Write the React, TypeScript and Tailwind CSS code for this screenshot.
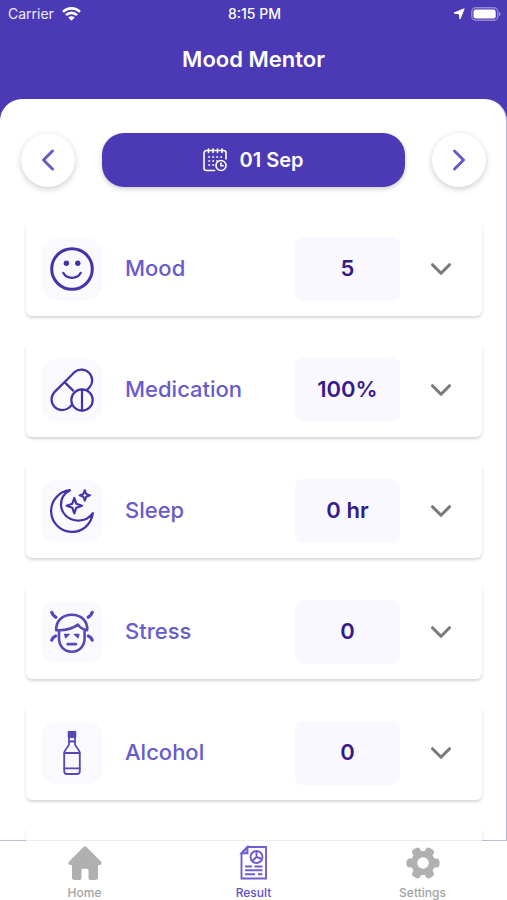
import { ReactNode, useState } from "react";
import { ChevronDown, ChevronLeft, ChevronRight } from "lucide-react";

interface Entry {
    label: string;
    value: string;
    icon: ReactNode;
}

interface Tab {
    label: string;
    icon: ReactNode;
}

const iconProps = {
    className: "h-11 w-11",
    viewBox: "0 0 44 44",
    fill: "none",
    stroke: "currentColor",
    strokeWidth: 2.2,
    strokeLinecap: "round" as const,
    strokeLinejoin: "round" as const,
    "aria-hidden": true,
};

const MoodIcon = () => (
    <svg {...iconProps} strokeWidth={3}>
        <circle cx="22" cy="22" r="20.3" />
        <circle cx="16.4" cy="16.3" r="2.7" fill="currentColor" stroke="none" />
        <circle cx="27.8" cy="16.3" r="2.7" fill="currentColor" stroke="none" />
        <path d="M13.3 25.8c3.2 6.7 14.2 6.7 17.4 0" strokeWidth="2.2" />
    </svg>
);

const MedicationIcon = () => (
    <svg {...iconProps}>
        <path d="M36.7 22.3l2.8-3A10.7 10.7 0 0 0 24.4 4.2L4.2 24.4a10.7 10.7 0 0 0 15.1 15.1l2.8-3" />
        <path d="M15 14.6l8.2 8" />
        <circle cx="32" cy="32" r="10.7" />
        <path d="M32 21.5v21" />
    </svg>
);

const SleepIcon = () => (
    <svg {...iconProps}>
        <path d="M20 1.2A20.9 20.9 0 1 0 42.8 24.2C39.5 29.2 33.5 31.9 27 31.5C18 31 11 24 11 15.5C11 9.5 14.2 4.2 20 1.2Z" />
        <path d="M24.3 9l2 5.7 5.7 2-5.7 2-2 5.7-2-5.7-5.7-2 5.7-2z" />
        <path d="M34.8 1.2l1.4 3.8 3.8 1.4-3.8 1.4-1.4 3.8-1.4-3.8-3.8-1.4 3.8-1.4z" strokeWidth="2" />
    </svg>
);

const StressIcon = () => (
    <svg {...iconProps} className="h-11 w-11 text-[#5a47b6]">
        <path d="M6.2 20.2C5.8 11 12.5 4.8 21.8 4.8S37.8 11 37.2 20.2C34 19.6 30 18 28 14.6C23 18.2 15 20.8 6.2 20.2Z" strokeWidth="2.6" />
        <path d="M9 20.5V28c0 8 5 13.7 12.8 13.7S34.6 36 34.6 28v-8" strokeWidth="2.6" />
        <path d="M14.6 24.4h4.6l-3.6 3.4zM29 24.4h-4.6l3.6 3.4z" fill="currentColor" strokeWidth="1.2" />
        <path d="M17.8 34.2h8" strokeWidth="2.8" />
        <path d="M1.8 2.5l1.4 2.6 2.6 2.2M42.2 2.5l-1.4 2.6-2.6 2.2M1.8 30l1.4-2.4 2.4-1.6M42.2 30l-1.4-2.4-2.4-1.6" strokeWidth="3.2" />
    </svg>
);

const AlcoholIcon = () => (
    <svg {...iconProps} className="h-11 w-11 text-[#5a47b6]" strokeWidth={1.8}>
        <path d="M18.6 1h6.8v5h-6.8z" fill="currentColor" />
        <path d="M19 6v7c0 3-4.8 5-4.8 9.5v17.8c0 1.8 1 2.7 2.7 2.7h10.2c1.7 0 2.7-.9 2.7-2.7V22.5c0-4.5-4.8-6.5-4.8-9.5V6" />
        <path d="M19 10.5h6M14.2 22h15.6M14.2 37.3h15.6" />
    </svg>
);

const CalendarIcon = () => (
    <svg className="h-6 w-6" viewBox="0 0 24 24" fill="none" stroke="currentColor" strokeWidth="1.6" strokeLinecap="round" aria-hidden>
        <path d="M11.5 22.5h-8A2.5 2.5 0 0 1 1 20V5a2.5 2.5 0 0 1 2.5-2.5h17A2.5 2.5 0 0 1 23 5v6" />
        <path d="M5.5 1v3.5M10 1v3.5M14.5 1v3.5M19 1v3.5" />
        <path d="M6 9h13M6 13h9M6 17h5" strokeDasharray="0.4 3.6" strokeWidth="1.8" strokeOpacity="0.8" />
        <circle cx="18" cy="17.5" r="5" />
        <path d="M18 15v2.7h2.2" />
    </svg>
);

const HomeIcon = () => (
    <svg className="h-9 w-9 text-[#b0b0b0]" viewBox="0 0 36 36" fill="currentColor" aria-hidden>
        <path d="M16.3 2.2 2.1 16.4c-1.4 1.5-.5 3.6 1.7 3.6H5v12.5C5 34.3 6 35 7.5 35h5c1.3 0 2-.7 2-2v-7.500c0-1 .7-1.700 1.700-1.700h3.600c1 0 1.700.7 1.700 1.700V33c0 1.300.7 2 2 2h5c1.500 0 2.500-.7 2.500-2.500V20h1.200c2.200 0 3.100-2.100 1.700-3.600L19.700 2.200a2.400 2.400 0 0 0-3.400 0z" />
    </svg>
);

const ResultIcon = () => (
    <svg className="h-9 w-9 text-[#6f5dd3]" viewBox="0 0 36 36" fill="none" stroke="currentColor" strokeWidth="1.9" aria-hidden>
        <path d="M11.5 2H30v31.5H5.5V8.2z" />
        <path d="M11.5 2v6.2h-6z" fill="currentColor" fillOpacity="0.4" />
        <circle cx="20.5" cy="12" r="6" />
        <path d="M20.5 6v6l-4.5 4M20.5 12l5.5 2" />
        <path d="M9 21.5h7M18.5 21.5h8M9 25.3h17.5M9 29.2h10M22 29.2h4.5" />
    </svg>
);

const SettingsIcon = () => (
    <svg className="h-9 w-9 text-[#b0b0b0]" viewBox="0 0 36 36" aria-hidden>
        <g fill="currentColor">
            <circle cx="18" cy="18" r="12" />
            {[0, 60, 120].map((angle) => (
                <rect key={angle} x="1.5" y="13.5" width="33" height="9" rx="3.5" transform={`rotate(${angle} 18 18)`} />
            ))}
        </g>
        <circle cx="18" cy="18" r="5.8" fill="white" />
    </svg>
);

const entries: Entry[] = [
    { label: "Mood", value: "5", icon: <MoodIcon /> },
    { label: "Medication", value: "100%", icon: <MedicationIcon /> },
    { label: "Sleep", value: "0 hr", icon: <SleepIcon /> },
    { label: "Stress", value: "0", icon: <StressIcon /> },
    { label: "Alcohol", value: "0", icon: <AlcoholIcon /> },
];

const tabs: Tab[] = [
    { label: "Home", icon: <HomeIcon /> },
    { label: "Result", icon: <ResultIcon /> },
    { label: "Settings", icon: <SettingsIcon /> },
];

const cardClass = "h-[95px] shrink-0 rounded-md bg-white shadow-[0_2px_3px_rgba(0,0,0,0.16)]";

function StatusBar() {
    return (
        <div className="grid h-7 grid-cols-3 items-center pr-1.5 pl-2 text-sm">
            <div className="flex items-center gap-2">
                <span className="text-white/90">Carrier</span>
                <svg className="h-3.5 w-[19px]" viewBox="0 0 19 14" fill="none" stroke="currentColor" strokeWidth="2.6" aria-hidden>
                    <path d="M1 4.9a12 12 0 0 1 17 0M4 8.2a7.7 7.7 0 0 1 11 0" />
                    <path d="M6.3 10.6a4.5 4.5 0 0 1 6.4 0L9.5 13.8z" fill="currentColor" stroke="none" />
                </svg>
            </div>
            <span className="text-center font-medium">8:15 PM</span>
            <div className="flex items-center justify-end gap-1.5">
                <svg className="h-3 w-3" viewBox="0 0 12 12" fill="currentColor" stroke="currentColor" strokeLinejoin="round" aria-hidden>
                    <path d="M11.2.8 7 11 6.2 5.8 1 5z" />
                </svg>
                <svg className="h-3.5 w-[30px]" viewBox="0 0 30 14" fill="none" aria-hidden>
                    <rect x="0.8" y="0.8" width="26" height="12.4" rx="4" stroke="white" strokeWidth="1.4" strokeOpacity="0.4" />
                    <rect x="2.5" y="2.5" width="22.2" height="9" rx="2.2" fill="white" />
                    <path d="M28 5c2 .6 2 3.4 0 4z" fill="white" fillOpacity="0.45" />
                </svg>
            </div>
        </div>
    );
}

function EntryCard({ label, value, icon }: Entry) {
    return (
        <article className={`${cardClass} flex items-center pr-6 pl-[15px]`}>
            <div className="flex h-[62px] w-[62px] items-center justify-center rounded-2xl bg-[#faf9fe] text-[#4631a8]">
                {icon}
            </div>
            <h2 className="ml-[22px] flex-1 text-[22px] font-medium text-[#695bcb]">{label}</h2>
            <output className="flex h-16 w-[105px] items-center justify-center rounded-lg bg-[#f9f8fe] text-[22px] font-semibold text-[#351a8c]">
                {value}
            </output>
            <button aria-label={`Expand ${label}`} className="ml-6 text-[#7b7b7b]">
                <ChevronDown className="h-[34px] w-[34px]" strokeWidth={2.2} />
            </button>
        </article>
    );
}

export default function App() {
    const [activeTab, setActiveTab] = useState("Result");

    return (
        <div className="flex h-dvh flex-col bg-[#4b39b5] font-['Inter',sans-serif]">
            <header className="h-[99px] shrink-0 text-white">
                <StatusBar />
                <h1 className="pt-4 text-center text-[22px] leading-[30px] font-semibold">Mood Mentor</h1>
            </header>

            <main className="flex min-h-0 flex-1 flex-col overflow-hidden rounded-t-[22px] border-r border-[#b9b1e2] bg-white">
                <div className="flex shrink-0 items-center gap-[27px] pt-[34px] pr-5 pl-[21px]">
                    <button
                        aria-label="Previous day"
                        className="flex h-[54px] w-[54px] items-center justify-center rounded-full bg-white text-[#6a58c8] shadow-[0_2px_6px_rgba(0,0,0,0.2)]"
                    >
                        <ChevronLeft className="h-9 w-9" strokeWidth={2} />
                    </button>
                    <button className="flex h-[54px] flex-1 items-center justify-center gap-3 rounded-[22px] bg-[#4b39b5] text-xl font-semibold text-white shadow-[0_2px_5px_rgba(0,0,0,0.2)]">
                        <CalendarIcon />
                        01 Sep
                    </button>
                    <button
                        aria-label="Next day"
                        className="flex h-[54px] w-[54px] items-center justify-center rounded-full bg-white text-[#6a58c8] shadow-[0_2px_6px_rgba(0,0,0,0.2)]"
                    >
                        <ChevronRight className="h-9 w-9" strokeWidth={2} />
                    </button>
                </div>

                <section className="mt-6 flex min-h-0 flex-1 flex-col gap-[26px] overflow-y-auto pt-2.5 pr-6 pl-[26px] [scrollbar-width:none]">
                    {entries.map((entry) => (
                        <EntryCard key={entry.label} {...entry} />
                    ))}
                    <div className={cardClass} />
                </section>
            </main>

            <div className="flex h-px shrink-0 bg-[#bdb8da]">
                <div className="mr-[25px] ml-[26px] flex-1 bg-[#ececec]" />
            </div>
            <nav className="grid h-[59px] shrink-0 grid-cols-3 bg-white">
                {tabs.map((tab) => (
                    <button
                        key={tab.label}
                        onClick={() => setActiveTab(tab.label)}
                        className={`flex flex-col items-center gap-1 pt-1 text-xs font-medium ${
                            activeTab === tab.label ? "text-[#6350cc]" : "text-[#a3a3a3]"
                        }`}
                    >
                        {tab.icon}
                        {tab.label}
                    </button>
                ))}
            </nav>
        </div>
    );
}
